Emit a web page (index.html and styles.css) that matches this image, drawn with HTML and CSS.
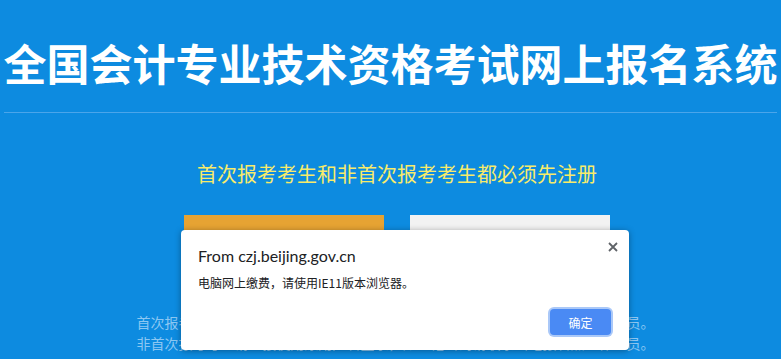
FILE: index.html
```html
<!DOCTYPE html>
<html lang="zh-CN">
<head>
<meta charset="utf-8">
<title>全国会计专业技术资格考试网上报名系统</title>
<link rel="stylesheet" href="styles.css">
</head>
<body>
<div class="page">
  <header class="header">
    <h1 class="title">全国会计专业技术资格考试网上报名系统</h1>
  </header>
  <div class="divider"></div>
  <main class="main">
    <p class="notice">首次报考考生和非首次报考考生都必须先注册</p>
    <div class="actions">
      <a class="btn btn-orange"></a>
      <a class="btn btn-light"></a>
    </div>
    <div class="tips">
      <p class="tip">首次报考考生请点击新用户注册按钮，填写报名信息并携带证件找报名点工作人员。</p>
      <p class="tip">非首次报考考生请直接使用原用户名登录，如忘记密码请联系当地报名点工作人员。</p>
    </div>
  </main>
</div>

<div class="dialog" role="alertdialog">
  <button class="dialog-close" aria-label="关闭">
    <svg width="10" height="10" viewBox="0 0 10 10"><path d="M1 1L9 9M9 1L1 9" stroke="#5f6368" stroke-width="1.8" fill="none"/></svg>
  </button>
  <div class="dialog-title">From czj.beijing.gov.cn</div>
  <div class="dialog-msg">电脑网上缴费，请使用IE11版本浏览器。</div>
  <div class="dialog-footer">
    <button class="dialog-ok">确定</button>
  </div>
</div>
</body>
</html>
```

FILE: styles.css
```css
html, body {
  margin: 0;
  padding: 0;
}
body {
  background: #0d8be0;
  width: 781px;
  height: 359px;
  overflow: hidden;
  position: relative;
  font-family: "Noto Sans CJK SC", "Noto Sans", sans-serif;
}
.page {
  display: flex;
  flex-direction: column;
}
.header {
  padding-top: 41px;
  padding-bottom: 28px;
}
.title {
  margin: 0;
  font-size: 43px;
  line-height: 43px;
  font-weight: 700;
  color: #ffffff;
  text-align: center;
  white-space: nowrap;
}
.divider {
  height: 1px;
  margin: 0 4px;
  background: #4ba5ea;
}
.main {
  padding-left: 13px;
  display: flex;
  flex-direction: column;
  align-items: center;
}
.notice {
  margin: 51px 0 0;
  font-size: 20px;
  line-height: 20px;
  color: #f8eb6a;
  white-space: nowrap;
}
.actions {
  margin-top: 31px;
  display: flex;
  gap: 26px;
}
.btn {
  width: 200px;
  height: 44px;
  display: block;
}
.btn-orange {
  background: #e6a333;
}
.btn-light {
  background: #f2f2f2;
}
.tips {
  margin-top: 53px;
  margin-right: 3px;
}
.tip {
  margin: 0;
  font-size: 14px;
  line-height: 21px;
  color: #8cc7f2;
  white-space: nowrap;
  text-align: center;
}

/* browser alert dialog overlay */
.dialog {
  position: absolute;
  left: 181px;
  top: 230px;
  width: 448px;
  height: 120px;
  box-sizing: border-box;
  background: #ffffff;
  border-radius: 4px;
  box-shadow: 0 1px 6px rgba(0, 0, 0, 0.35);
  padding: 15px 16px 15px 17px;
  display: flex;
  flex-direction: column;
  font-family: Lato, "Noto Sans", "Noto Sans CJK SC", sans-serif;
}
.dialog-close {
  position: absolute;
  right: 11px;
  top: 12px;
  width: 10px;
  height: 10px;
  padding: 0;
  border: 0;
  background: none;
  display: flex;
}
.dialog-title {
  font-size: 16px;
  line-height: 21px;
  color: #202124;
}
.dialog-msg {
  margin-top: 9px;
  font-family: "Noto Sans CJK SC", sans-serif;
  font-size: 12px;
  line-height: 16px;
  color: #202124;
}
.dialog-footer {
  margin-top: auto;
  display: flex;
  justify-content: flex-end;
  padding-right: 2px;
}
.dialog-ok {
  width: 61px;
  height: 26px;
  border: 0;
  border-radius: 4px;
  background: #4a8af4;
  color: #ffffff;
  font-family: "Noto Sans CJK SC", sans-serif;
  font-size: 12px;
  box-shadow: 0 0 0 2px #aac8f8;
  padding: 0;
}
```
